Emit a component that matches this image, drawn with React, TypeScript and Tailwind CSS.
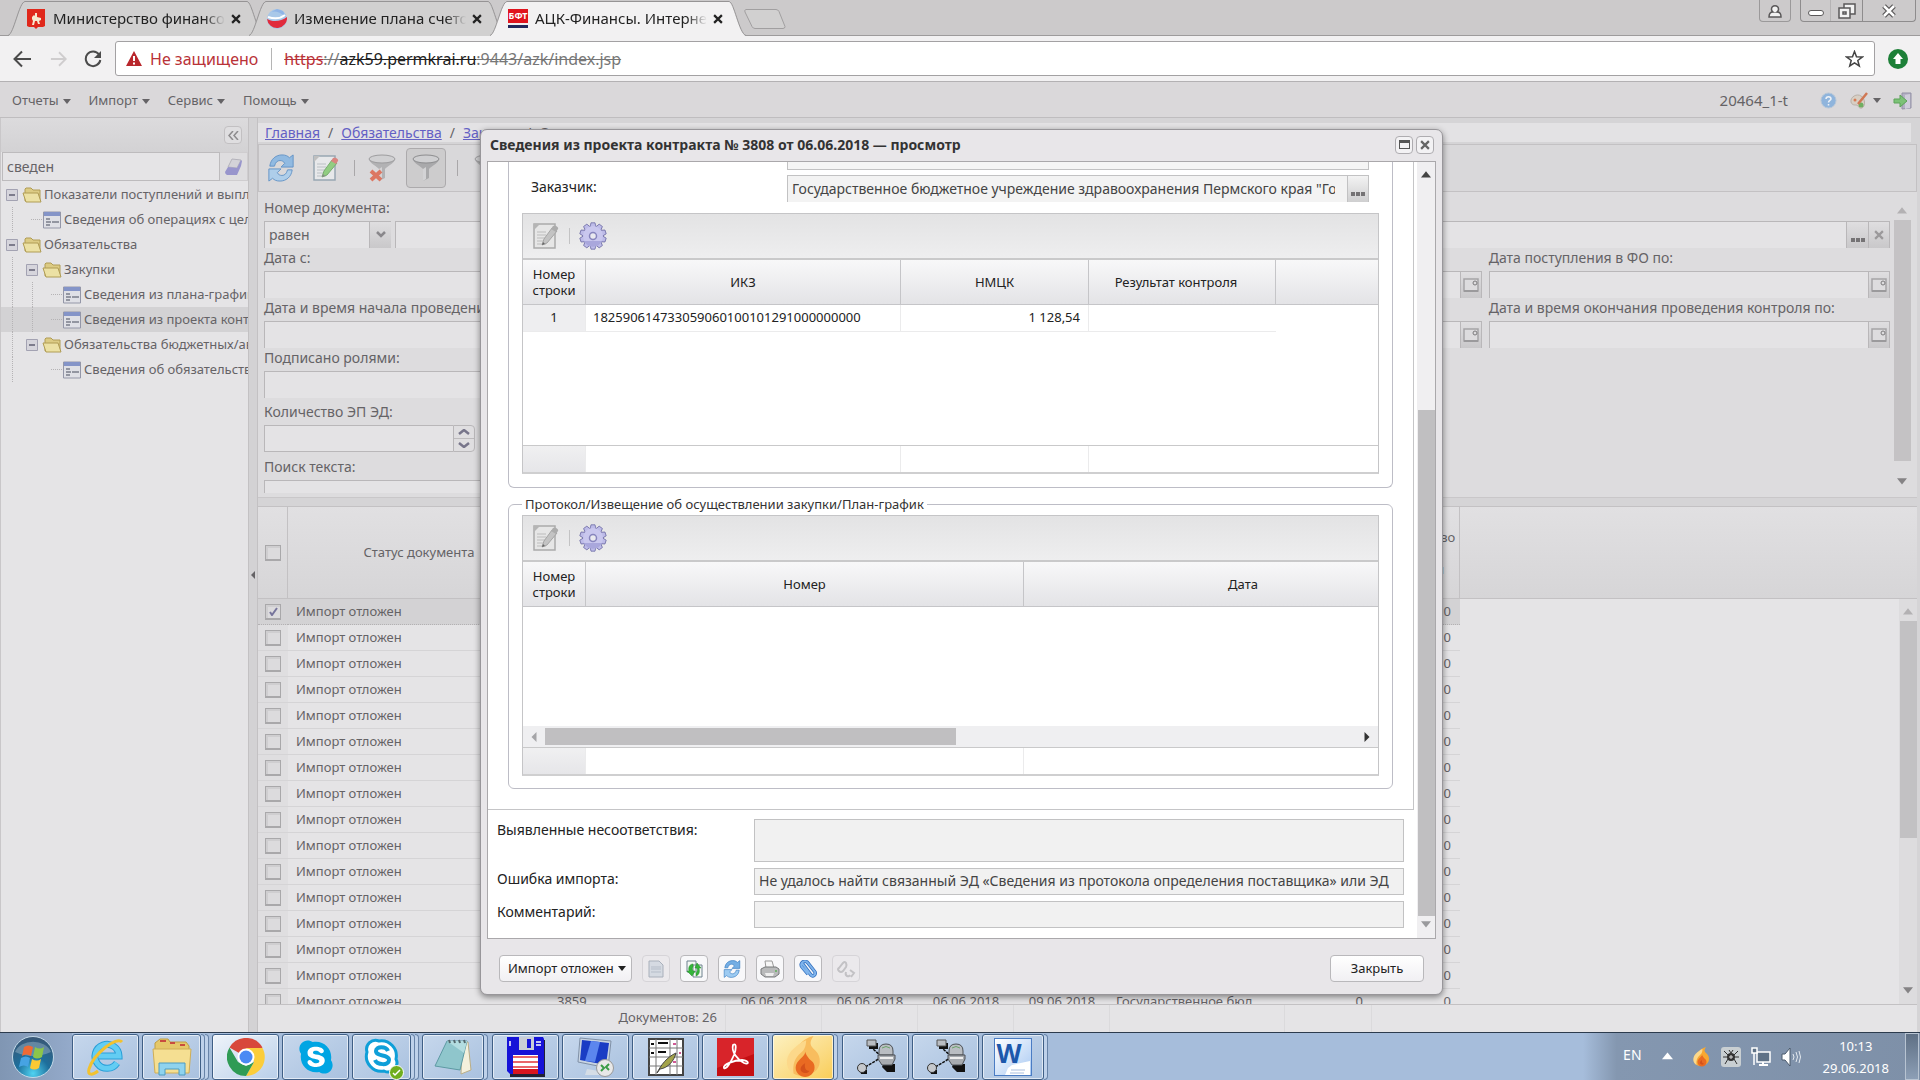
import React, { ReactNode } from "react";
import clsx from "clsx";
import { FaSkype } from "react-icons/fa";

/* ---------- small pieces ---------- */

const Caret = ({ dir = "down", size = 8, className }: { dir?: "up" | "down" | "left" | "right"; size?: number; className?: string }) => {
  const d = { down: "M0 0h8L4 5z", up: "M0 5h8L4 0z", left: "M5 0v8L1 4z", right: "M1 0v8l4-4z" }[dir];
  return (
    <svg width={size} height={size} viewBox={dir === "down" || dir === "up" ? "0 -1 8 8" : "-1 0 8 8"} className={className} fill="currentColor">
      <path d={d} />
    </svg>
  );
};

const CloseX = ({ size = 9, width = 2 }: { size?: number; width?: number }) => (
  <svg width={size} height={size} viewBox="0 0 9 9" fill="none" stroke="currentColor" strokeWidth={width}>
    <path d="M1 1l7 7M8 1L1 8" />
  </svg>
);

const RefreshIcon = ({ size = 30 }: { size?: number }) => (
  <svg width={size} height={size} viewBox="0 0 30 30">
    <path d="M3 13C4 5 10 1 16 1c4 0 6 1 8 3l4-3v13H15l4-4c-1-2-3-3-5-3-3 0-5 2-6 6z" fill="#74aee4" stroke="#2f75bd" />
    <path d="M27 17c-1 8-7 12-13 12-4 0-6-1-8-3l-4 3V16h13l-4 4c1 2 3 3 5 3 3 0 5-2 6-6z" fill="#9dcbf2" stroke="#2f75bd" />
  </svg>
);

const PageEditIcon = ({ gray }: { gray?: boolean }) => (
  <svg width="28" height="28" viewBox="0 0 28 28">
    <path d="M3 2h21v24H3z" fill={gray ? "#e6e6e6" : "#eef0f2"} stroke={gray ? "#ababab" : "#7d92a3"} strokeWidth="1.5" />
    <path d="M3 8l6-6H3z" fill="#b5b5b5" />
    <path d="M6 10h9M6 13h9M6 16h9M6 19h9M6 22h9" stroke={gray ? "#cacaca" : "#c3c9ce"} strokeWidth="1.5" />
    <path d="M11 23l2-6L21 6l5 3-10 12z" fill={gray ? "#c3c3c3" : "#74c95c"} stroke={gray ? "#a5a5a5" : "#4f9a43"} />
    <path d="M20 7l2-3c2-1 6 1 5 3l-2 3z" fill={gray ? "#acacac" : "#d9635a"} />
    <path d="M11 23l1-3 2 2z" fill="#666" />
  </svg>
);

const FunnelIcon = ({ crossed }: { crossed?: boolean }) => (
  <svg width="30" height="30" viewBox="0 0 30 30">
    <path d="M2 6c0 4 9 8 10 10v12l6-3v-9c1-2 10-6 10-10z" fill="#a9a9ab" />
    <path d="M12 16v12l3-2V14z" fill="#d3d3d5" />
    <ellipse cx="15" cy="6" rx="13" ry="4" fill="#cfcfd1" stroke="#8d8d8f" />
    {crossed && <path d="M4 18l10 9M14 18L4 27" stroke="#dd5f45" strokeWidth="4" />}
  </svg>
);

const GearIcon = () => (
  <svg width="28" height="28" viewBox="0 0 28 28">
    {[0, 36, 72, 108, 144, 180, 216, 252, 288, 324].map((a) => (
      <path key={a} d="M10.500 7L12 .8h4L17.500 7z" fill="#bdbbe8" stroke="#6f6da6" strokeWidth=".8" transform={`rotate(${a} 14 14)`} />
    ))}
    <circle cx="14" cy="14" r="10" fill="#c9c7ee" />
    <path d="M5 19a10 10 0 0 0 18 0z" fill="#a9a7dc" />
    <circle cx="14" cy="14" r="3.500" fill="#e9e9ef" stroke="#8785bd" strokeWidth="1.500" />
  </svg>
);

const FolderIcon = () => (
  <svg width="20" height="18" viewBox="0 0 20 18" className="shrink-0">
    <path d="M3 15V3l1-1h5l2 2h7v11z" fill="#dccb84" stroke="#b09c55" />
    <path d="M1 7h15l3 9H4z" fill="#ece1a4" stroke="#b09c55" />
  </svg>
);

const FormIcon = () => (
  <svg width="20" height="18" viewBox="0 0 20 18" className="shrink-0">
    <path d="M1.500 1h17v16h-17z" fill="#dfe0e6" stroke="#9497a8" />
    <path d="M2 1h16v4H2z" fill="#8494c8" />
    <path d="M4 8h4M4 11h5M4 14h4M10 11h7" stroke="#7b7d8a" strokeWidth="1.500" />
  </svg>
);

const CalendarIcon = () => (
  <svg width="16" height="16" viewBox="0 0 16 16" fill="none">
    <path d="M1 2h14v12H1z" fill="#dddcde" stroke="#a5a4a6" strokeWidth="1.500" />
    <path d="M1 14h14" stroke="#9b9a9c" strokeWidth="2" />
    <circle cx="12" cy="6" r="2" stroke="#7b7a7c" />
  </svg>
);

/* ---------- browser chrome ---------- */

const CrestIcon = () => (
  <svg width="18" height="20" viewBox="0 0 18 20">
    <path d="M0 0h18v17l-2 1h-5l-2 2-2-2H2l-2-1z" fill="#e0281b" />
    <path d="M5 8l2-2 1 1V4h2v4l4 1v2l-2 1 1 3h-2l-1-3H8l-1 4H5l1-4-1-2z" fill="#f6e9cf" />
  </svg>
);
const GlobeIcon = () => (
  <svg width="20" height="20" viewBox="0 0 20 20">
    <circle cx="10" cy="10" r="10" fill="#a9c8e8" />
    <path d="M2 4C7 1 13 3 19 8L16 2 10 0z" fill="#8fb4e6" />
    <path d="M0 10c5 3 14 3 20-2a10 10 0 0 1-20 2z" fill="#e12b3c" />
    <path d="M1 8c6 2 12 2 17-2" stroke="#fff" strokeWidth="2" fill="none" />
  </svg>
);
const BftIcon = () => (
  <span className="flex h-[19px] w-5 flex-col">
    <span className="h-[14px] bg-[#e0141e] text-center text-[9px] font-bold leading-[14px] text-white">БФТ</span>
    <span className="mt-[2px] h-[3px] bg-[#23285c]" />
  </span>
);

const tabs: { title: string; icon: ReactNode; active?: boolean }[] = [
  { title: "Министерство финансов", icon: <CrestIcon /> },
  { title: "Изменение плана счетов", icon: <GlobeIcon /> },
  { title: "АЦК-Финансы. Интернет", icon: <BftIcon />, active: true },
];

const BrowserTabs = () => (
  <div className="flex h-9 items-stretch justify-between border-b border-[#9d9b9c] bg-[#cccacb]">
    <div className="flex items-stretch pl-2">
      {tabs.map((tab) => (
        <div key={tab.title} className={clsx("relative flex w-[241px] items-center pl-[18px] pr-2 pt-[2px]", tab.active && "z-10")}>
          <svg className="absolute left-0 top-0" width="256" height="36" viewBox="0 0 256 36">
            <path d="M0 36C6 34 11 2 17 1h222c5 1 10 33 17 35z" fill={tab.active ? "#f2f1f2" : "#d1d0d0"} />
            <path d="M0 35.500C6 34 11 2 17 1.500h222c5 0 10 32 17 34" fill="none" stroke="#969495" />
          </svg>
          <span className="relative flex w-5 shrink-0 justify-center">{tab.icon}</span>
          <span className="relative ml-[7px] w-[172px] overflow-hidden whitespace-nowrap text-[15px] text-[#222] [mask-image:linear-gradient(to_right,#000_88%,transparent)]">
            {tab.title}
          </span>
          <button aria-label="Закрыть вкладку" className="relative ml-[6px] text-[#222]">
            <CloseX size={10} />
          </button>
        </div>
      ))}
      <button aria-label="Новая вкладка" className="ml-[13px] mt-[9px] h-5">
        <svg width="42" height="20" viewBox="0 0 42 20">
          <path d="M2 .5h30q2 0 3 2l6 15q0 2-2 2H11q-2 0-3-2L1 3Q0 1 2 .5z" fill="#d1d0d0" stroke="#a19fa0" />
        </svg>
      </button>
    </div>
    <div className="flex items-start gap-[9px] pr-1 text-[#5a5859]">
      <button aria-label="Профиль" className="flex h-[22px] w-8 items-center justify-center rounded-b border border-t-0 border-[#9b999a]">
        <svg width="14" height="14" viewBox="0 0 14 14" fill="#f2f2f2" stroke="currentColor" strokeWidth="1.500">
          <path d="M1 13c0-4 2-5 4-5a3.500 3.500 0 1 1 4 0c2 0 4 1 4 5z" />
        </svg>
      </button>
      <div className="flex h-[22px] rounded-b border border-t-0 border-[#8e8c8d]">
        <button aria-label="Свернуть" className="flex w-[30px] items-center justify-center border-r border-[#b5b3b4] pt-1">
          <span className="h-[6px] w-4 rounded-sm border border-[#5a5859] bg-white" />
        </button>
        <button aria-label="Восстановить" className="flex w-8 items-center justify-center border-r border-[#8e8c8d]">
          <svg width="18" height="16" viewBox="0 0 18 16" fill="#f2f2f2" stroke="currentColor" strokeWidth="1.500">
            <path d="M6 1h11v10H6z" />
            <path d="M1 5h11v10H1zM5 9h3v2H5z" />
          </svg>
        </button>
        <button aria-label="Закрыть" className="flex w-[52px] items-center justify-center">
          <svg width="16" height="14" viewBox="0 0 16 14">
            <path d="M3 2l10 10M13 2L3 12" stroke="#5a5859" strokeWidth="5" />
            <path d="M3 2l10 10M13 2L3 12" stroke="#fff" strokeWidth="2.500" />
          </svg>
        </button>
      </div>
    </div>
  </div>
);

const AddressBar = () => (
  <div className="flex h-[46px] items-center border-b border-[#b3b1b3] bg-[#f2f1f2] pl-3 pr-3">
    <button aria-label="Назад" className="w-[38px] text-[#4b4b4b]">
      <svg width="20" height="18" viewBox="0 0 20 18" fill="none" stroke="currentColor" strokeWidth="2"><path d="M19 9H3M10 1.500L2.500 9l7.500 7.500" /></svg>
    </button>
    <button aria-label="Вперёд" className="w-[34px] text-[#cfcdce]">
      <svg width="18" height="18" viewBox="0 0 20 18" fill="none" stroke="currentColor" strokeWidth="2"><path d="M1 9h16M10 1.500L17.500 9 10 16.500" /></svg>
    </button>
    <button aria-label="Обновить" className="w-[31px] text-[#4b4b4b]">
      <svg width="18" height="18" viewBox="0 0 18 18" fill="none" stroke="currentColor" strokeWidth="2">
        <path d="M15 4.500A7.300 7.300 0 1 0 16.300 10" />
        <path d="M17 1v7h-7z" fill="currentColor" stroke="none" />
      </svg>
    </button>
    <div className="flex h-[35px] flex-1 items-center rounded-[3px] border border-[#a3a1a3] bg-white px-[10px] text-[16px]">
      <svg width="16" height="15" viewBox="0 0 16 15"><path d="M8 0l8 15H0z" fill="#b9272c" /><path d="M8 5v5M8 11.500v2" stroke="#fff" strokeWidth="2" /></svg>
      <span className="ml-2 text-[#b93238]">Не защищено</span>
      <span className="ml-[13px] mr-3 h-[22px] w-px bg-[#b5b5b5]" />
      <span className="flex-1 text-[#777] line-through">
        <span className="text-[#b93238] line-through">https</span>://<span className="text-[#222] line-through">azk59.permkrai.ru</span>:9443/azk/index.jsp
      </span>
      <button aria-label="В избранное">
        <svg width="19" height="18" viewBox="0 0 19 18" fill="none" stroke="#444" strokeWidth="1.500">
          <path d="M9.500 1.500l2 5.200 5.800.3-4.500 3.500 1.500 5.500-4.800-3.100L4.700 16l1.500-5.500L1.700 7l5.800-.3z" />
        </svg>
      </button>
    </div>
    <button aria-label="Обновить браузер" className="ml-[13px]">
      <svg width="20" height="20" viewBox="0 0 20 20"><circle cx="10" cy="10" r="10" fill="#1d8038" /><path d="M10 4l5 6h-2.500v5h-5v-5H5z" fill="#fff" /></svg>
    </button>
  </div>
);

/* ---------- application background ---------- */

const menus = ["Отчеты", "Импорт", "Сервис", "Помощь"];

const MenuBar = () => (
  <div className="flex h-[36px] items-center justify-between border-b border-[#bfbdbf] bg-[#dad8da] pl-3 pr-2 pt-[2px] text-[13px]">
    <div className="flex gap-[18px]">
      {menus.map((m) => (
        <button key={m} className="flex items-center gap-1">
          {m}
          <Caret className="mt-[2px]" />
        </button>
      ))}
    </div>
    <div className="flex items-center text-[15px]">
      <span>20464_1-t</span>
      <button aria-label="Справка" className="ml-8">
        <svg width="17" height="17" viewBox="0 0 17 17"><circle cx="8.500" cy="8.500" r="7.500" fill="#8fb4dc" stroke="#b7c7d8" /><path d="M6 7c0-3 5-3 5 0 0 1.500-2.500 1.500-2.500 3.500M8.500 12v1.500" fill="none" stroke="#eef2f7" strokeWidth="1.500" /></svg>
      </button>
      <button aria-label="Оформление" className="ml-3 flex items-center gap-1">
        <svg width="20" height="18" viewBox="0 0 20 18"><path d="M2 10C1 5 8 1 12 4c4 2 5 10 1 12-4 1-3-3-6-3-2 0-4 0-5-3z" fill="#d8cfc4" stroke="#b9b0a7" /><circle cx="6" cy="8" r="1.500" fill="#d77b54" /><circle cx="12" cy="13" r="2.500" fill="#6fae62" /><path d="M9 12L18 1" stroke="#cf7754" strokeWidth="2.500" /></svg>
        <Caret />
      </button>
      <button aria-label="Выход" className="ml-3">
        <svg width="19" height="18" viewBox="0 0 19 18"><path d="M9 1h9v15l-9 1z" fill="#b3b1c4" stroke="#9390a5" /><path d="M12 3l5-1v14l-5 1z" fill="#cfcddb" /><path d="M1 7h6V3l7 6-7 6v-4H1z" fill="#7cc277" stroke="#5da35a" /></svg>
      </button>
    </div>
  </div>
);

type TreeItem = { text: string; level: number; leaf?: boolean; selected?: boolean; lines: number };
const tree: TreeItem[] = [
  { text: "Показатели поступлений и выплат", level: 0, lines: 0 },
  { text: "Сведения об операциях с целевыми", level: 1, leaf: true, lines: 1 },
  { text: "Обязательства", level: 0, lines: 0 },
  { text: "Закупки", level: 1, lines: 1 },
  { text: "Сведения из плана-графика", level: 2, leaf: true, lines: 2 },
  { text: "Сведения из проекта контракта", level: 2, leaf: true, selected: true, lines: 2 },
  { text: "Обязательства бюджетных/автоном.", level: 1, lines: 1 },
  { text: "Сведения об обязательствах", level: 2, leaf: true, lines: 1 },
];

const Sidebar = () => (
  <aside className="flex w-[248px] shrink-0 flex-col overflow-hidden border-l border-[#c9c7c9] bg-[#e5e4e6]">
    <div className="flex h-[34px] items-center justify-end bg-gradient-to-b from-[#dcdbdd] to-[#d3d2d4] pr-[6px]">
      <button aria-label="Свернуть панель" className="flex size-[18px] items-center justify-center rounded border border-[#c2c0c2] bg-[#dfdee0] text-[#8d8b8d]">
        <svg width="11" height="9" viewBox="0 0 11 9" fill="none" stroke="currentColor" strokeWidth="1.500"><path d="M5 0L1 4.500 5 9M10 0L6 4.500 10 9" /></svg>
      </button>
    </div>
    <div className="flex h-[29px] items-stretch pl-px">
      <input aria-label="Поиск по дереву" defaultValue="сведен" className="w-0 flex-1 border border-[#bdbbbd] bg-[#e5e4e6] px-1 text-[14px] outline-none" />
      <button aria-label="Очистить" className="flex w-7 items-center justify-center border border-l-0 border-[#cfcdcf] bg-[#dedddf]">
        <svg width="20" height="18" viewBox="0 0 20 18"><path d="M8 1l9 1-4 8-9-1z" fill="#d3d2d8" stroke="#b4b3bb" /><path d="M4 9l9 1 4-8 1 1-1 5-4 9H3q-2-1-2-3z" fill="#9895cc" /></svg>
      </button>
    </div>
    <ul className="pt-px text-[13px]">
      {tree.map((item) => (
        <li key={item.text} className={clsx("flex h-[25px] items-center whitespace-nowrap pl-px", item.selected && "bg-[#d3d2d4]")}>
          {Array.from({ length: item.level }).map((_, i) => (
            <span key={i} className="flex h-full w-5 shrink-0 justify-center">
              {i < item.lines && <span className="border-l border-dotted border-[#b5b3b5]" />}
            </span>
          ))}
          <span className="flex h-full w-5 shrink-0 items-center justify-center">
            {item.leaf ? (
              <span className="ml-[9px] w-full border-t border-dotted border-[#b5b3b5]" />
            ) : (
              <svg width="12" height="12" viewBox="0 0 12 12"><path d="M.5.5h11v11H.5z" fill="#d6d5dc" stroke="#a3a2b2" /><path d="M3 6h6" stroke="#5f5e72" strokeWidth="1.500" /></svg>
            )}
          </span>
          {item.leaf ? <FormIcon /> : <FolderIcon />}
          <span className="ml-[2px]">{item.text}</span>
        </li>
      ))}
    </ul>
  </aside>
);

const Trigger = ({ children, label }: { children: ReactNode; label: string }) => (
  <button aria-label={label} className="flex w-[22px] shrink-0 items-center justify-center border-l border-t border-[#b9b7b9] bg-gradient-to-b from-[#dfdee0] to-[#c9c8ca] text-[#9b999b] last:border-r">
    {children}
  </button>
);

const Field = ({ id, label, className, trigger }: { id: string; label: string; className?: string; trigger?: ReactNode }) => (
  <div className={className}>
    <label htmlFor={id} className="flex h-[23px] items-center whitespace-nowrap pb-1">{label}</label>
    <div className="flex h-[27px]">
      <input id={id} className="w-0 flex-1 border-l border-t border-[#b9b7b9] bg-[#e4e3e5] outline-none" />
      {trigger}
    </div>
  </div>
);

const calendar = <Trigger label="Выбрать дату"><CalendarIcon /></Trigger>;

const Scrollbar = ({ className, children }: { className?: string; children: ReactNode }) => (
  <div className={clsx("flex w-[18px] shrink-0 flex-col items-center", className)}>{children}</div>
);

const Dots = () => (
  <span className="flex h-full items-end gap-px pb-[6px]">
    <span className="size-1 bg-[#757375]" />
    <span className="size-1 bg-[#757375]" />
    <span className="size-1 bg-[#757375]" />
  </span>
);

const Filters = () => (
  <div className="flex h-[306px] overflow-hidden border-b border-[#c9c7c9] bg-[#dddcde] pl-[6px] pt-[6px] text-[14px]">
    <div className="grid flex-1 grid-cols-4 content-start gap-x-[7px]">
      <div>
        <label htmlFor="doc-number" className="flex h-[23px] items-center pb-1">Номер документа:</label>
        <div className="flex h-[27px]">
          <select aria-label="Условие" className="w-[105px] appearance-none border-l border-t border-[#b9b7b9] bg-[#e4e3e5] px-1 pb-[2px] outline-none">
            <option>равен</option>
          </select>
          <Trigger label="Открыть список">
            <svg width="12" height="8" viewBox="0 0 12 8" fill="none" stroke="#89878b" strokeWidth="2.500"><path d="M2 1l4 4 4-4" /></svg>
          </Trigger>
          <input id="doc-number" className="ml-1 w-0 flex-1 border-l border-t border-[#b9b7b9] bg-[#e4e3e5] outline-none" />
        </div>
      </div>
      <Field
        id="customer"
        label="Заказчик:"
        className="col-span-3"
        trigger={
          <>
            <Trigger label="Выбрать"><Dots /></Trigger>
            <Trigger label="Очистить"><CloseX size={10} /></Trigger>
          </>
        }
      />
      <Field id="date-from" label="Дата с:" trigger={calendar} />
      <Field id="date-to" label="Дата по:" trigger={calendar} />
      <Field id="fo-from" label="Дата поступления в ФО с:" trigger={calendar} />
      <Field id="fo-to" label="Дата поступления в ФО по:" trigger={calendar} />
      <Field id="start-from" label="Дата и время начала проведения контроля с:" trigger={calendar} />
      <Field id="start-to" label="Дата и время начала проведения контроля по:" trigger={calendar} />
      <Field id="end-from" label="Дата и время окончания проведения контроля с:" trigger={calendar} />
      <Field id="end-to" label="Дата и время окончания проведения контроля по:" trigger={calendar} />
      <Field id="roles" label="Подписано ролями:" className="col-span-2" />
      <div className="col-span-4 mt-1">
        <label htmlFor="sign-count" className="flex h-[23px] items-center pb-1">Количество ЭП ЭД:</label>
        <div className="flex h-[27px] w-[211px]">
          <input id="sign-count" className="w-0 flex-1 border border-r-0 border-[#b9b7b9] bg-[#e4e3e5] outline-none" />
          <div className="flex w-[22px] flex-col divide-y divide-[#bdbbbd] rounded-r border border-[#b9b7b9] bg-[#dfdee0]">
            {["M1 5l5-4 5 4", "M1 1l5 4 5-4"].map((d, i) => (
              <button key={d} aria-label={i ? "Меньше" : "Больше"} className="flex flex-1 items-center justify-center">
                <svg width="12" height="6" viewBox="0 0 12 6" fill="none" stroke="#77758a" strokeWidth="2.500"><path d={d} /></svg>
              </button>
            ))}
          </div>
        </div>
      </div>
      <Field id="text-search" label="Поиск текста:" className="col-span-2 mt-[5px] h-[36px] overflow-hidden" />
    </div>
    <Scrollbar className="ml-[3px] mr-[6px] text-[#b3b1b3]">
      <Caret dir="up" size={10} className="mb-1 mt-2" />
      <div className="h-[241px] w-[17px] bg-[#c4c2c4]" />
      <Caret size={10} className="mt-4 text-[#858385]" />
    </Scrollbar>
  </div>
);

type DocRow = { status: string; number?: string; dates?: string[]; customer?: string; sum?: string; count: string };
const docs: DocRow[] = [
  ...Array.from({ length: 15 }, () => ({ status: "Импорт отложен", count: "0" })),
  {
    status: "Импорт отложен",
    number: "3859",
    dates: ["06.06.2018", "06.06.2018", "06.06.2018", "09.06.2018"],
    customer: "Государственное бюд",
    sum: "0",
    count: "0",
  },
];

const DocCols = () => (
  <colgroup>
    <col className="w-[30px]" />
    <col className="w-[263px]" />
    <col className="w-[175px]" />
    <col className="w-[96px]" />
    <col className="w-[96px]" />
    <col className="w-[96px]" />
    <col className="w-[96px]" />
    <col className="w-[175px]" />
    <col className="w-[87px]" />
    <col className="w-[88px]" />
    <col />
  </colgroup>
);

const RowCheck = ({ label, checked }: { label: string; checked?: boolean }) => (
  <label className="relative mx-auto block size-4">
    <input type="checkbox" aria-label={label} defaultChecked={checked} className="block size-4 appearance-none border border-b-2 border-[#a9a8aa] bg-[#dcdbdd] shadow-[inset_2px_2px_0_#cfced0]" />
    {checked && (
      <svg className="absolute left-1 top-[3px]" width="9" height="9" viewBox="0 0 9 9" fill="none" stroke="#77759c" strokeWidth="2"><path d="M1 5l2 3 5-7" /></svg>
    )}
  </label>
);

const DocGrid = () => (
  <div className="flex min-h-0 flex-1 flex-col bg-[#e5e4e6] text-[13px]">
    <table className="w-full table-fixed border-separate border-spacing-0">
      <DocCols />
      <thead>
        <tr className="h-[92px] bg-gradient-to-b from-[#e1e0e2] to-[#d6d5d7]">
          <th className="border-b border-r border-[#c3c1c3]"><RowCheck label="Выбрать все" /></th>
          <th className="border-b border-r border-[#c3c1c3] font-normal">Статус документа</th>
          {Array.from({ length: 7 }).map((_, i) => <th key={i} className="border-b border-r border-[#c3c1c3]" />)}
          <th className="border-b border-r border-[#c3c1c3] pl-[6px] font-normal leading-4">
            Количество
            <br />
            всех
            <br />
            записей
          </th>
          <th className="border-b border-[#c3c1c3]" />
        </tr>
      </thead>
    </table>
    <div className="flex min-h-0 flex-1">
      <div className="min-w-0 flex-1 overflow-hidden">
        <table className="w-full table-fixed border-separate border-spacing-0">
          <DocCols />
          <tbody>
            {docs.map((d, i) => (
              <tr
                key={i}
                className={clsx(
                  "h-[26px] [&>td]:border-b [&>td:last-child]:border-0 [&>td]:py-0 [&>td]:whitespace-nowrap",
                  i === 0 ? "[&>td]:border-dotted [&>td]:border-[#b3b1b3] [&>td]:bg-[#d3d2d4] [&>td:last-child]:bg-transparent" : "[&>td]:border-[#d5d4d6]"
                )}
              >
                <td className="bg-[#dfdee0]"><RowCheck label={`Строка ${i + 1}`} checked={i === 0} /></td>
                <td className="pl-2">{d.status}</td>
                <td className="pl-[6px]">{d.number}</td>
                {[0, 1, 2, 3].map((n) => <td key={n} className="text-center">{d.dates?.[n]}</td>)}
                <td className="overflow-hidden pl-[6px]">{d.customer}</td>
                <td className="pr-[9px] text-right">{d.sum}</td>
                <td className="pr-[9px] text-right">{d.count}</td>
                <td />
              </tr>
            ))}
          </tbody>
        </table>
      </div>
      <Scrollbar className="bg-[#dddcde] text-[#b3b1b3]">
        <Caret dir="up" size={10} className="mb-1 mt-2" />
        <div className="h-[217px] w-[17px] bg-[#c2c1c3]" />
        <Caret size={10} className="mb-2 mt-auto text-[#858385]" />
      </Scrollbar>
    </div>
    <div className="h-[28px] border-t border-[#c3c1c3]">
      <div className="grid h-full grid-cols-[293px_175px_96px_96px_96px_96px_175px_87px_1fr] items-center divide-x divide-[#dbdadc]">
        <span />
        <span className="h-full pr-2 text-right leading-6">Документов: 26</span>
        {Array.from({ length: 7 }).map((_, i) => <span key={i} className="h-full" />)}
      </div>
    </div>
  </div>
);

const MainPanel = () => (
  <main className="flex min-w-0 flex-1 flex-col bg-[#d5d4d6] pr-[3px]">
    <nav className="mr-[6px] mt-[5px] flex h-[19px] items-center gap-2 whitespace-nowrap bg-[#e3e2e4] pl-[7px] text-[14px]">
      {["Главная", "Обязательства", "Закупки"].map((c) => (
        <React.Fragment key={c}>
          <a href="#" className="text-[#6360c4] underline">{c}</a>
          <span>/</span>
        </React.Fragment>
      ))}
      <span>Сведения из проекта контракта</span>
    </nav>
    <div className="mt-[2px] flex h-[48px] items-center border border-[#c3c1c3] bg-[#d9d8da] pl-2">
      <button aria-label="Обновить" className="w-[44px] opacity-70"><RefreshIcon size={28} /></button>
      <button aria-label="Изменить" className="w-[43px] opacity-70"><PageEditIcon /></button>
      <span className="mr-3 h-4 w-px bg-[#a9a7a9]" />
      <button aria-label="Сбросить фильтр" className="w-[39px] opacity-80"><FunnelIcon crossed /></button>
      <button aria-label="Фильтр" className="flex size-10 items-center justify-center rounded border border-[#acaaac] bg-[#cdcccd]"><FunnelIcon /></button>
      <span className="mx-[11px] h-4 w-px bg-[#a9a7a9]" />
      <button aria-label="Настроить фильтр" className="pl-1 opacity-80"><FunnelIcon /></button>
    </div>
    <Filters />
    <div className="h-[9px] shrink-0 border-b border-[#c3c1c3]" />
    <DocGrid />
  </main>
);

/* ---------- dialog ---------- */

const GridToolbar = () => (
  <div className="flex h-[46px] items-center border-b-2 border-[#c9c9ca] bg-gradient-to-b from-[#e3e3e4] to-[#eeeeef] pl-2">
    <button aria-label="Изменить" disabled><PageEditIcon gray /></button>
    <span className="ml-[10px] mr-[9px] h-4 w-px bg-[#c3c3c4]" />
    <button aria-label="Настройка"><GearIcon /></button>
  </div>
);

const headCell = "border-b border-r border-[#c5c5c8] font-normal leading-4 last:border-r-0";

const IkzGrid = () => (
  <div className="border-x border-b-2 border-t border-[#c5c5c7] border-b-[#cfcfd0]">
    <GridToolbar />
    <div className="flex h-[212px] flex-col">
      <table className="w-full table-fixed border-separate border-spacing-0 text-[13px]">
        <colgroup>
          <col className="w-[63px]" />
          <col className="w-[315px]" />
          <col className="w-[188px]" />
          <col className="w-[187px]" />
          <col />
        </colgroup>
        <thead>
          <tr className="h-[45px] bg-gradient-to-b from-[#f8f8f9] to-[#e3e3e6]">
            <th className={headCell}>Номер строки</th>
            <th className={headCell}>ИКЗ</th>
            <th className={headCell}>НМЦК</th>
            <th className={clsx(headCell, "pr-3")}>Результат контроля</th>
            <th className={headCell} />
          </tr>
        </thead>
        <tbody>
          <tr className="h-[27px] [&>td]:border-b [&>td]:border-r [&>td]:border-[#ebebec] [&>td:nth-child(n+4)]:border-r-0 [&>td:last-child]:border-0">
            <td className="bg-[#eeeef0] text-center">1</td>
            <td className="pl-[7px]">182590614733059060100101291000000000</td>
            <td className="pr-2 text-right">1 128,54</td>
            <td />
            <td />
          </tr>
        </tbody>
      </table>
      <div className="mt-auto grid h-[27px] grid-cols-[63px_315px_188px_1fr] divide-x divide-[#ebebec] border-t border-[#c9c9ca]">
        <span className="bg-gradient-to-b from-[#f0f0f1] to-[#e6e6e9]" />
        <span /><span /><span />
      </div>
    </div>
  </div>
);

const ProtocolGrid = () => (
  <div className="border-x border-b-2 border-t border-[#c5c5c7] border-b-[#cfcfd0]">
    <GridToolbar />
    <div className="overflow-hidden">
      <table className="w-[939px] table-fixed border-separate border-spacing-0 text-[13px]">
        <colgroup>
          <col className="w-[63px]" />
          <col className="w-[438px]" />
          <col className="w-[438px]" />
        </colgroup>
        <thead>
          <tr className="h-[45px] bg-gradient-to-b from-[#f8f8f9] to-[#e3e3e6]">
            <th className={headCell}>Номер строки</th>
            <th className={headCell}>Номер</th>
            <th className={headCell}>Дата</th>
          </tr>
        </thead>
      </table>
    </div>
    <div className="h-[119px]" />
    <div className="flex h-[21px] items-center bg-[#efeff1] px-[6px] text-[#a5a5a8]">
      <Caret dir="left" size={10} />
      <div className="ml-[6px] h-[17px] w-[411px] bg-[#c0bfc1]" />
      <Caret dir="right" size={10} className="ml-auto text-[#333]" />
    </div>
    <div className="grid h-[27px] grid-cols-[63px_438px_1fr] divide-x divide-[#ebebec] border-t border-[#c9c9ca]">
      <span className="bg-gradient-to-b from-[#f0f0f1] to-[#e6e6e9]" />
      <span /><span />
    </div>
  </div>
);

const SummaryField = ({ id, label, value, tall }: { id: string; label: string; value?: string; tall?: boolean }) => (
  <div className="flex items-start">
    <label htmlFor={id} className="w-[257px] shrink-0 leading-[22px]">{label}</label>
    {tall ? (
      <textarea id={id} readOnly className="h-[43px] w-0 flex-1 resize-none border border-[#c2c2c3] bg-[#f1f1f1] outline-none" />
    ) : (
      <input id={id} readOnly defaultValue={value} className="h-[27px] w-0 flex-1 border border-[#c2c2c3] bg-[#f1f1f1] px-1 pb-[2px] text-[14px] text-[#444] outline-none" />
    )}
  </div>
);

const footerIcons: { label: string; icon: ReactNode; disabled?: boolean }[] = [
  {
    label: "Сохранить",
    disabled: true,
    icon: <svg width="18" height="18" viewBox="0 0 18 18"><path d="M2 1h10l4 4v12H2z" fill="#d5dae2" stroke="#a9b0bb" /><path d="M4 7h10M4 9h10M4 12h10" stroke="#b5bdc9" /></svg>,
  },
  {
    label: "Создать копию",
    icon: <svg width="18" height="18" viewBox="0 0 18 18"><path d="M2 1h9v11H2zM8 5h9v12H8z" fill="#f4f8f4" stroke="#6f8290" /><path d="M7 16l-5-5h2C3 7 5 4 8 4v3c-1 1-1 2 0 4h2zM12 3l4 5h-2c1 4 0 7-3 8v-3c1-1 2-3 1-5h-2z" fill="#34b53a" stroke="#258b2b" strokeWidth=".5" /></svg>,
  },
  { label: "Обновить", icon: <RefreshIcon size={18} /> },
  {
    label: "Печать",
    icon: <svg width="20" height="18" viewBox="0 0 20 18"><path d="M5 1h7l2 7H6z" fill="#f6f6f6" stroke="#999" /><path d="M1 9l4-2h11l3 2v5l-4 3H5l-4-3z" fill="#b9babb" stroke="#77787a" /><path d="M5 13h9l-1 3H6z" fill="#eee" /><circle cx="16" cy="11" r="1" fill="#5fae58" /></svg>,
  },
  {
    label: "Вложения",
    icon: <svg width="18" height="18" viewBox="0 0 18 18" fill="none"><path d="M3 3l9 12c2 2 5 0 4-3L9 3C6-1 0 3 3 7l6 7" stroke="#2f6dbd" strokeWidth="3.500" /><path d="M3 3l9 12c2 2 5 0 4-3L9 3C6-1 0 3 3 7l6 7" stroke="#7fb4ec" strokeWidth="2" /></svg>,
  },
  {
    label: "Связи",
    disabled: true,
    icon: <svg width="20" height="18" viewBox="0 0 20 18" fill="none" stroke="#c3c2c5" strokeWidth="2"><path d="M3 11q-2-2 0-3l4-5q2-2 3 0t0 4l-3 4q-2 2-4 0z" /><path d="M10 12q-1 3 1 4t3-1M14 10l4 3-3 4" /></svg>,
  },
];

const ContractDialog = () => (
  <section role="dialog" aria-labelledby="dialog-title" className="w-[963px] rounded-[7px] border border-[#98969a] bg-[#e8e6e9] px-[6px] text-[#222] shadow-[0_2px_6px_rgba(0,0,0,0.45)]">
    <header className="flex h-[31px] items-center justify-between pb-[2px] pl-[3px] pr-[2px]">
      <h1 id="dialog-title" className="text-[14px] font-bold text-[#333]">Сведения из проекта контракта № 3808 от 06.06.2018 — просмотр</h1>
      <div className="flex gap-[3px]">
        <button aria-label="Развернуть" className="flex size-[18px] items-center justify-center rounded border border-[#aeacb0] bg-[#f3f2f4]">
          <span className="h-[9px] w-[11px] border border-t-[3px] border-[#555]" />
        </button>
        <button aria-label="Закрыть окно" className="flex size-[18px] items-center justify-center rounded border border-[#aeacb0] bg-[#f3f2f4] text-[#666]">
          <CloseX size={10} />
        </button>
      </div>
    </header>
    <div className="flex border border-[#aaa8ab] bg-white">
      <div className="min-w-0 flex-1">
        <div className="mr-[3px] border-b border-r border-[#c5c5c7] px-5 pb-5">
          <div className="rounded-b-md border border-t-0 border-[#bdbdc6] px-[13px] pb-[13px]">
            <div className="ml-[265px] mr-[10px] h-2 border-x border-b border-[#c2c2c3] bg-[#f5f5f5]" />
            <div className="mb-[11px] mr-[10px] mt-[5px] flex text-[14px]">
              <label htmlFor="dialog-customer" className="w-[265px] shrink-0 pl-[9px] leading-6">Заказчик:</label>
              <input
                id="dialog-customer"
                readOnly
                defaultValue={'Государственное бюджетное учреждение здравоохранения Пермского края "Городская'}
                className="h-[27px] w-0 flex-1 border-l border-t border-[#c2c2c3] bg-[#f3f3f3] pb-[2px] pl-1 pr-3 text-[#444] outline-none"
              />
              <button aria-label="Выбрать заказчика" className="flex h-[27px] w-[22px] justify-center border border-b-0 border-[#c2c2c3] bg-gradient-to-b from-[#f3f3f3] to-[#cfcfd0]">
                <Dots />
              </button>
            </div>
            <IkzGrid />
          </div>
          <fieldset className="mt-2 min-w-0 rounded-md border border-[#bdbdc6] px-[13px] pb-3 pt-[3px]">
            <legend className="px-[3px] text-[13px] leading-4 text-[#333]">Протокол/Извещение об осуществлении закупки/План-график</legend>
            <ProtocolGrid />
          </fieldset>
        </div>
        <div className="flex flex-col gap-[6px] pb-[10px] pl-[9px] pr-[13px] pt-[9px] text-[14px]">
          <SummaryField id="mismatch" label="Выявленные несоответствия:" tall />
          <SummaryField id="import-error" label="Ошибка импорта:" value="Не удалось найти связанный ЭД «Сведения из протокола определения поставщика» или ЭД" />
          <SummaryField id="comment" label="Комментарий:" />
        </div>
      </div>
      <Scrollbar className="bg-[#f0eff1] text-[#444]">
        <Caret dir="up" size={10} className="mt-2" />
        <div className="mt-auto h-[506px] w-[17px] bg-[#c0bfc1]" />
        <Caret size={10} className="mb-2 mt-1 text-[#9a9a9d]" />
      </Scrollbar>
    </div>
    <footer className="flex items-center gap-[10px] px-3 pb-[12px] pt-4 text-[13px]">
      <button className="flex h-[27px] items-center gap-1 rounded border border-[#b9b8bb] bg-gradient-to-b from-white to-[#f1f0f3] pl-2 pr-[5px]">
        Импорт отложен
        <Caret />
      </button>
      {footerIcons.map((b) => (
        <button
          key={b.label}
          aria-label={b.label}
          disabled={b.disabled}
          className={clsx("flex h-[27px] w-7 items-center justify-center rounded border", b.disabled ? "border-[#d6d4d8] bg-[#ebe9ec]" : "border-[#b9b8bb] bg-[#f8f8fa]")}
        >
          {b.icon}
        </button>
      ))}
      <button className="ml-auto h-[27px] w-[94px] rounded border border-[#b9b8bb] bg-gradient-to-b from-white to-[#f1f0f3]">Закрыть</button>
    </footer>
  </section>
);

/* ---------- taskbar ---------- */

const FlameIcon = ({ size = 40, soft }: { size?: number; soft?: boolean }) => (
  <svg width={size} height={size} viewBox="0 0 40 40">
    <path d="M30 0c-4 6-4 9 2 14 6 6 5 16-1 20-6 5-16 6-22 0C3 28 6 20 11 15 17 9 18 3 30 0z" fill={soft ? "#f8bd5e" : "#f7a832"} />
    <path d="M9 14C2 22 4 32 11 36c-1-9 1-15 7-20 4-3 5-8 5-12-5 2-9 5-14 10z" fill="#fcd88a" />
    <path d="M22 15c1 4-9 8-9 15 0 5 4 9 9 9s9-4 9-9-3-6-5-8c-2-3-3-4-4-7z" fill="#e96a22" />
    <path d="M22 26c-3 2-5 4-4 7 2 3 7 3 8 0-3 1-5-3-4-7z" fill="#d4511a" />
  </svg>
);

const NetIcon = () => (
  <svg width="40" height="36" viewBox="0 0 40 36">
    <path d="M6 30L26 18l-10-9" fill="none" stroke="#111" strokeWidth="1.500" strokeDasharray="3 1" />
    <path d="M13 4h9v6h-9zM27 25h12v8h-8l-5-5zM4 31h7v4H5z" fill="#111" />
    <path d="M11 1h9v6h-9z" fill="#b9bdc2" stroke="#555" />
    <path d="M23 12q0-7 7-7t7 7v4H23z" fill="#b9bdc2" stroke="#4d5156" />
    <path d="M26 9q4-3 8 0" stroke="#6aa36a" fill="none" />
    <path d="M22 16h17v4l-3 6H26l-4-6z" fill="#a7abb0" stroke="#4d5156" />
    <path d="M24 19h13" stroke="#eee" strokeWidth="2" />
    <circle cx="6" cy="29" r="4.500" fill="#c5c8cc" stroke="#333" />
  </svg>
);

type Task = { label: string; icon: ReactNode; stack?: number; hot?: boolean; active?: boolean };
const tasks: Task[] = [
  {
    label: "Internet Explorer",
    icon: <svg width="40" height="40" viewBox="0 0 40 40" fill="none"><path d="M31 26a12 12 0 1 1 2-7H13" stroke="#2a9fd8" strokeWidth="7" /><path d="M31 26a12 12 0 1 1 2-7H13" stroke="#63cdf3" strokeWidth="5" /><path d="M36 5C31-1 8 16 3 32c-2 7 4 6 9 2" stroke="#f2c230" strokeWidth="3" /></svg>,
  },
  {
    label: "Проводник",
    stack: 2,
    icon: <svg width="42" height="40" viewBox="0 0 42 40"><path d="M4 6l5-4h8l2 3h16l3 4v24H4z" fill="#e5c869" stroke="#bf9d42" /><path d="M2 12h38l-2 24H4z" fill="#f5df92" stroke="#cfae56" /><path d="M8 38V26h26v12h-6v-6H14v6z" fill="#8fd3ee" stroke="#4c9cc2" /><path d="M9 4h6M19 6h5M29 8h5" stroke="#c94c3f" strokeWidth="2" /></svg>,
  },
  {
    label: "Google Chrome",
    active: true,
    icon: <svg width="38" height="38" viewBox="0 0 38 38"><path d="M19 19L2.500 9.500a19 19 0 0 1 33 0z" fill="#d8483b" /><path d="M19 10h16.500A19 19 0 0 1 19 38l8-14z" fill="#fbcd3b" /><path d="M2.500 9.500A19 19 0 0 0 19 38l8-14-8 4-8-4z" fill="#2f9b55" /><circle cx="19" cy="19" r="8.500" fill="#fff" /><circle cx="19" cy="19" r="6.500" fill="#4a8af4" /></svg>,
  },
  {
    label: "Skype",
    icon: <span className="relative flex"><span className="absolute inset-2 rounded-full bg-white" /><FaSkype size={38} className="relative text-[#00a5e3]" /></span>,
  },
  {
    label: "Skype для бизнеса",
    stack: 2,
    icon: (
      <span className="relative flex">
        <svg width="36" height="38" viewBox="0 0 36 38"><path d="M3 14A9 9 0 0 1 15 3a15 15 0 0 1 17 18 9 9 0 0 1-12 12A15 15 0 0 1 3 14z" fill="#fff" stroke="#0f9fd8" strokeWidth="3" /><path d="M24 13c-2-5-12-5-12 0 0 6 13 3 13 9 0 6-12 5-14 0" fill="none" stroke="#0f9fd8" strokeWidth="4" /></svg>
        <svg className="absolute -bottom-1 -right-1" width="15" height="15" viewBox="0 0 15 15"><circle cx="7.500" cy="7.500" r="7" fill="#6fae1e" stroke="#fff" /><path d="M4 8l2 2 5-5" stroke="#fff" strokeWidth="1.500" fill="none" /></svg>
      </span>
    ),
  },
  {
    label: "Блокнот",
    stack: 1,
    icon: <svg width="38" height="36" viewBox="0 0 38 36"><path d="M28 3h6l3 28-10 4z" fill="#f4f0dc" stroke="#b9ae88" /><path d="M13 2h20L26 31 1 27z" fill="#8fc6cc" stroke="#5d9aa3" /><path d="M13 2h20l-3 12z" fill="#b3dde0" /><path d="M15 1l1 3M20 1l1 3M25 1l1 3M30 1l1 3" stroke="#54686d" strokeWidth="2" /></svg>,
  },
  {
    label: "Total Commander",
    icon: <svg width="38" height="40" viewBox="0 0 38 40"><path d="M3 3h35v37H3z" fill="#223" /><path d="M0 0h36l1 2v35H3l-3-3z" fill="#1512d8" /><path d="M12 0h15v13H12z" fill="#c9cdd6" /><path d="M20 2h4v9h-4z" fill="#1512d8" /><path d="M6 18h25v19H6z" fill="#fff" /><path d="M6 20h25M6 25h25M6 30h25" stroke="#e2343a" strokeWidth="1.500" /><path d="M6 32h25v5H6z" fill="#d8151f" /><path d="M3 4v5M29 5h5M29 8h5" stroke="#fff" strokeWidth="1.500" /></svg>,
  },
  {
    label: "Удалённый рабочий стол",
    icon: <svg width="38" height="40" viewBox="0 0 38 40"><path d="M3 1l31 3-3 27L1 25z" fill="#c8d4e2" stroke="#7f90a6" /><path d="M5 3l27 3-3 22L3 23z" fill="#1a3cc4" /><path d="M14 4l9 1-5 20-10-1z" fill="#5c86ee" /><path d="M10 32l12 2v4H8z" fill="#d5dde6" /><circle cx="28" cy="31" r="8.500" fill="#e8e8e8" stroke="#999" /><path d="M24 28l3 3-3 3M32 27l-3 3 3 3" stroke="#3a9c46" strokeWidth="2" fill="none" /></svg>,
  },
  {
    label: "Таблица",
    icon: <svg width="36" height="38" viewBox="0 0 36 38"><path d="M1 1h34v36H1z" fill="#fff" stroke="#444" strokeWidth="2" /><path d="M1 10h34M1 19h34M1 28h34M8 1v36M22 1v36M29 1v36" stroke="#777" /><path d="M10 5h10M10 14h8M3 6h3M3 15h3" stroke="#111" strokeWidth="2" /><path d="M25 6h3M31 15h2M25 24h3" stroke="#d05a95" strokeWidth="2" /><path d="M9 35c4-8 10-16 19-20-2 8-8 15-16 16z" fill="#a3a34a" stroke="#444" /></svg>,
  },
  {
    label: "Adobe Reader",
    icon: <svg width="37" height="38" viewBox="0 0 37 38"><path d="M0 0h37v38H0z" fill="#c40f13" /><path d="M0 0h37v16L0 30z" fill="#d8242a" /><path d="M16 7c4-3 3 5 1 10-3 7-8 15-10 13-2-3 10-8 18-8 8 1 7 5 2 3-6-3-13-11-11-18z" fill="none" stroke="#fff" strokeWidth="1.800" /></svg>,
  },
  { label: "Пламя", hot: true, stack: 1, icon: <FlameIcon size={42} soft /> },
  { label: "Сеть", icon: <NetIcon /> },
  { label: "Сеть 2", icon: <NetIcon /> },
  {
    label: "Microsoft Word",
    stack: 1,
    icon: (
      <span className="relative flex size-[38px] items-center justify-center border border-[#4a7cc4] bg-gradient-to-br from-white to-[#a9c9f2]">
        <span className="pb-2 pr-2 text-[26px] font-bold leading-none text-[#1d58ab]">W</span>
        <svg className="absolute bottom-0 right-0" width="26" height="16" viewBox="0 0 26 16"><path d="M3 9l4-3 18-4v14H0z" fill="#fff" /><path d="M6 11h14M5 14h14" stroke="#a9bede" /></svg>
      </span>
    ),
  },
];

const TaskButton = ({ task }: { task: Task }) => (
  <div className="flex w-[70px] items-stretch">
    <button
      aria-label={task.label}
      className={clsx(
        "flex items-center justify-center rounded-[3px] border border-[#3f5f86] shadow-[inset_0_0_0_1px_rgba(255,255,255,0.6)]",
        !task.stack && "w-[67px]",
        task.stack === 1 && "w-[62px]",
        task.stack === 2 && "w-[59px]",
        task.hot ? "bg-gradient-to-br from-[#fdf1c0] to-[#f9cd55]" : task.active ? "bg-gradient-to-br from-[#eff4fa] to-[#b9cfe9]" : "bg-gradient-to-br from-[#c6d7ec] to-[#a9c1df]"
      )}
    >
      {task.icon}
    </button>
    {Array.from({ length: task.stack ?? 0 }).map((_, i) => (
      <span key={i} className="w-1 rounded-r border border-l-0 border-[#6783a8] bg-[#bed1ea]" />
    ))}
  </div>
);

const Taskbar = () => (
  <div className="flex h-12 shrink-0 items-stretch border-t border-[#2c3b4d] bg-[#a6bddb]">
    <button aria-label="Пуск" className="flex w-[72px] items-center justify-center bg-gradient-to-r from-[#8096b3] to-[#94aaca] pr-[6px]">
      <svg width="44" height="44" viewBox="0 0 44 44">
        <defs>
          <radialGradient id="orb" cx="50%" cy="90%" r="90%">
            <stop offset="0" stopColor="#4fd3f2" />
            <stop offset=".45" stopColor="#1e6f9c" />
            <stop offset="1" stopColor="#3a5674" />
          </radialGradient>
        </defs>
        <circle cx="22" cy="22" r="20.500" fill="url(#orb)" stroke="#c3d9e8" />
        <path d="M4 17a19 15 0 0 1 36 0q-18 8-36 0z" fill="#fff" opacity=".25" />
        <path d="M13 12q4-3 9 0l-2 9q-5-3-9 0z" fill="#ee6a34" />
        <path d="M24 12q5 3 9 0l-2 10q-5 3-9 0z" fill="#8cc54a" />
        <path d="M10 23q5-3 9 0l-2 9q-4-3-9 0z" fill="#46a3e3" />
        <path d="M21 24q5 3 9 0l-2 9q-5 3-9 0z" fill="#fbc934" />
      </svg>
    </button>
    <div className="flex pt-px">
      {tasks.map((t) => <TaskButton key={t.label} task={t} />)}
    </div>
    <div className="ml-auto flex items-center bg-gradient-to-r from-[#a6bddb] via-[#8497b0] via-10% to-[#7e90a8] pl-10 text-white">
      <span className="pb-1 text-[14px]">EN</span>
      <button aria-label="Скрытые значки" className="ml-5"><Caret dir="up" size={11} /></button>
      <div className="ml-[18px] flex items-center gap-[10px]">
        <FlameIcon size={20} />
        <svg width="20" height="20" viewBox="0 0 20 20"><rect width="20" height="20" rx="3" fill="#c9cfd2" /><circle cx="10" cy="10" r="4" fill="#333" /><path d="M3 4l4 4M17 4l-4 4M2 10h5M13 10h5M4 17l3-5M16 17l-3-5M8 3l2 3 2-3" stroke="#333" fill="none" /><path d="M8 10h4M10 8v4" stroke="#ddd" /></svg>
        <svg width="20" height="20" viewBox="0 0 20 20" fill="none"><path d="M6 5h13v10H6z" fill="#5f7287" stroke="#fff" strokeWidth="1.500" /><path d="M8 18h9M12 15v3" stroke="#fff" strokeWidth="2" /><path d="M1 1h5v5H1zM3 6v12" fill="#5f7287" stroke="#fff" strokeWidth="1.500" /></svg>
        <svg width="20" height="20" viewBox="0 0 20 20" fill="none"><path d="M1 7h3l5-6v18l-5-6H1z" fill="#fff" stroke="#4b5a6c" /><path d="M12 7q2 3 0 6M15 5q3 5 0 10M18 4q3 6 0 12" stroke="#e4eaf0" /></svg>
      </div>
      <div className="ml-[22px] text-center text-[13px] leading-[22px]">
        <div>10:13</div>
        <div>29.06.2018</div>
      </div>
      <button aria-label="Показать рабочий стол" className="ml-4 mr-px h-full w-[14px] border border-[#b8c4d2] bg-gradient-to-b from-[#5f7085] to-[#8d9fb6]" />
    </div>
  </div>
);

export default function App() {
  return (
    <div className="flex h-screen flex-col overflow-hidden font-['Noto_Sans','Open_Sans',sans-serif]">
      <BrowserTabs />
      <AddressBar />
      <div className="relative flex min-h-0 flex-1 flex-col text-[#656366]">
        <MenuBar />
        <div className="flex min-h-0 flex-1">
          <Sidebar />
          <div className="flex w-[10px] shrink-0 items-center border-x border-[#c3c1c3] bg-[#d3d2d4]">
            <Caret dir="left" />
          </div>
          <MainPanel />
        </div>
        <div className="absolute inset-0 flex items-start justify-center pl-[3px] pt-[47px]">
          <ContractDialog />
        </div>
      </div>
      <Taskbar />
    </div>
  );
}
